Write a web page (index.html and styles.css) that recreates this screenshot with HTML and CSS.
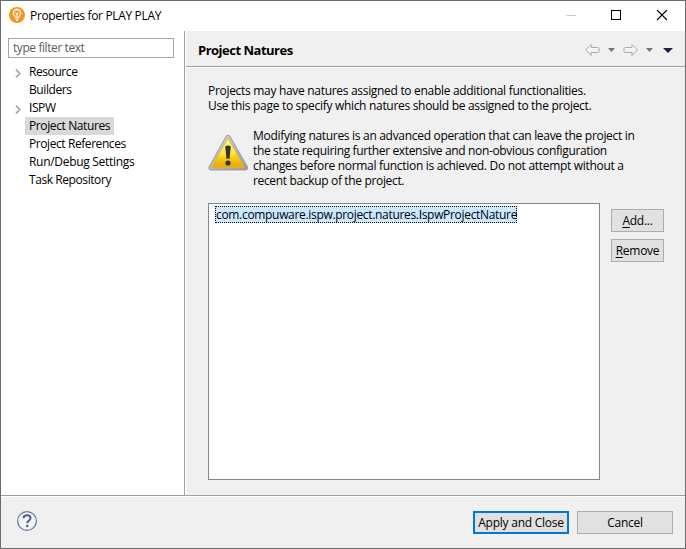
FILE: index.html
```html
<!DOCTYPE html>
<html lang="en">
<head>
<meta charset="utf-8">
<title>Properties for PLAY PLAY</title>
<link rel="stylesheet" href="styles.css">
</head>
<body>
<div class="window">
  <header class="titlebar">
    <svg class="app-icon" width="16" height="16" viewBox="0 0 16 16"><circle cx="8" cy="8" r="8" fill="#f7941d"/><path d="M6.200 10.500C6.200 9 4.200 8.600 4.200 6.200a3.800 3.800 0 0 1 7.600 0c0 2.400-2 2.800-2 4.300z" fill="#f9a94b" stroke="#fff" stroke-width="1.100"/><path d="M6.300 12h3.400M7 13.500h2M8 10V7M6.800 6l1.200 1.200L9.200 6" stroke="#fff" stroke-width=".9" fill="none"/></svg>
    <span class="title">Properties for PLAY PLAY</span>
    <svg class="controls" width="104" height="12" viewBox="0 0 104 12" shape-rendering="crispEdges"><path d="M0 6.500h10" stroke="#ccc"/><rect x="45.500" y="1.500" width="9" height="9" fill="none" stroke="#000"/><path d="M91 1l10 10M101 1L91 11" stroke="#000" stroke-width="1.100" shape-rendering="auto"/></svg>
  </header>
  <main class="body">
    <nav class="sidebar">
      <div class="filter"><span>type filter text</span></div>
      <ul class="tree">
        <li><svg class="chev" width="6" height="9" viewBox="0 0 6 9"><path d="M1 .7l3.700 3.800L1 8.300"/></svg><span>Resource</span></li>
        <li><span>Builders</span></li>
        <li><svg class="chev" width="6" height="9" viewBox="0 0 6 9"><path d="M1 .7l3.700 3.800L1 8.300"/></svg><span><span class="cap-i">I</span>SPW</span></li>
        <li><span class="selected">Project Natures</span></li>
        <li><span>Project References</span></li>
        <li><span class="t-run">Run/Debug Settings</span></li>
        <li><span>Task Repository</span></li>
      </ul>
    </nav>
    <section class="page">
      <div class="page-head">
        <h1><span>Project Natures</span></h1>
        <svg class="nav" width="90" height="14" viewBox="0 0 90 14"><defs><linearGradient id="a" x2="0" y2="1"><stop stop-color="#fff"/><stop offset="1" stop-color="#e4e4e4"/></linearGradient></defs><g fill="url(#a)" stroke="#aaa" stroke-linejoin="round"><path d="M.6 7l5.500-5.500v3h6.500q1.500 0 1.500 1v3q0 1-1.500 1H6.100v3z"/><path d="M52.500 7L47 1.500v3h-6.500q-1.500 0-1.500 1v3q0 1 1.500 1H47v3z"/></g><path d="M23 5h7l-3.500 4z" fill="#76747b"/><path d="M61 5h7l-3.500 4z" fill="#76747b"/><path d="M78 5h10l-5 5z" fill="#2f1743"/></svg>
      </div>
      <div class="content">
        <p class="intro"><span>Projects may have natures assigned to enable additional functionalities.</span><span>Use this page to specify which natures should be assigned to the project.</span></p>
        <div class="warning">
          <svg width="41" height="37" viewBox="0 0 41 37"><defs><linearGradient id="y" x2="0" y2="1"><stop stop-color="#fff27a"/><stop offset=".45" stop-color="#fbe51e"/><stop offset="1" stop-color="#efa30b"/></linearGradient><linearGradient id="g" x2="1" y2="1"><stop stop-color="#d8d8d8"/><stop offset="1" stop-color="#999"/></linearGradient></defs><path d="M18 2.300q2-2.600 4 0L39.600 33q.8 2.800-2 3H3q-3-.4-2-3z" fill="url(#g)" stroke="#929292" stroke-width=".8"/><path d="M20 4.500L36.500 33.500h-33z" fill="url(#y)" stroke="#e0ba16" stroke-width=".7"/><path d="M20 5L10.500 21.500q11 2 18 -2z" fill="#fff" opacity=".2"/><path d="M17.200 12.500q2.800-2 5.600 0l-1.300 12.200h-3z" fill="#34332c"/><circle cx="20" cy="29" r="2.600" fill="#34332c"/></svg>
          <p><span>Modifying natures is an advanced operation that can leave the project in</span><span class="w2">the state requiring further extensive and non-obvious configuration</span><span>changes before normal function is achieved. Do not attempt without a</span><span class="w4">recent backup of the project.</span></p>
        </div>
        <div class="natures">
          <div class="list"><div class="item"><span>com.compuware.ispw.project.natures.<span class="cap-i">I</span>spwProjectNature</span></div></div>
          <div class="actions"><button><span><u>A</u>dd...</span></button><button><span><u>R</u>emove</span></button></div>
        </div>
      </div>
    </section>
  </main>
  <footer class="footer">
    <svg width="22" height="22" viewBox="0 0 22 22"><circle cx="11" cy="11" r="9.400" fill="#f3f4f6" stroke="#66799b" stroke-width="1.200"/><path d="M7.500 8.300Q7.600 5.200 11 5.200t3.500 2.800q0 1.500-1.600 2.600T11.300 13.200" fill="none" stroke="#4b6189" stroke-width="2"/><circle cx="11.200" cy="16" r="1.300" fill="#4b6189"/></svg>
    <div class="buttons"><button class="primary"><span>Apply and Close</span></button><button><span>Cancel</span></button></div>
  </footer>
</div>
</body>
</html>
```
FILE: styles.css
```css
* { box-sizing: border-box; }
body { margin: 0; font: 12px/15px "Open Sans", "Noto Sans", sans-serif; color: #000; letter-spacing: -0.25px; }
p, h1, ul { margin: 0; padding: 0; }
span { white-space: nowrap; }
.cap-i { font-family: "Liberation Sans", sans-serif; line-height: 1px; }
.window { width: 686px; height: 549px; border: 1px solid #6b6b6d; display: flex; flex-direction: column; background: #f0f0f0; overflow: hidden; }
.titlebar { height: 30px; flex: none; background: #fff; display: flex; align-items: center; padding: 0 15px 2px 8px; }
.title { margin-left: 5px; padding-top: 1px; letter-spacing: -0.34px; }
.controls { margin-left: auto; }
.body { height: 464px; flex: none; display: flex; }
.sidebar { width: 184px; flex: none; background: #fff; border-right: 1px solid #a0a0a0; padding: 7px 10px 0 7px; }
.filter { height: 20px; border: 1px solid #a5a5ab; padding: 1px 4px; color: #5c5c5c; line-height: 16px; letter-spacing: -0.42px; }
.tree { list-style: none; padding-top: 5px; letter-spacing: -0.42px; }
.tree li { height: 18px; line-height: 18px; display: flex; align-items: center; padding-left: 21px; }
.t-run { letter-spacing: -0.3px; }
.chev { margin: 2px 8px 0 -14px; fill: none; stroke: #a6a6a6; stroke-width: 1.7; }
.tree li > .chev { flex: none; }
.selected { background: #d9d9d9; height: 18px; width: 89px; margin-left: -4px; padding-left: 4px; flex: none; letter-spacing: -0.39px; }
.page { flex: 1; border-left: 1px solid #fff; }
.page-head { height: 37px; border-bottom: 1px solid #fff; box-shadow: inset 0 -1px #a0a0a0; display: flex; align-items: center; padding: 0 10px 0 12px; }
h1 { font-size: 13px; line-height: 18px; font-weight: 700; letter-spacing: -0.5px; padding-top: 1px; }
.nav { margin: 1px 0 0 auto; }
.content { padding: 15px 21px 0 22px; letter-spacing: -0.306px; }
.intro span, .warning p > span { display: block; width: max-content; }
.warning { display: flex; gap: 4px; margin-top: 15px; height: 75px; }
.warning svg { margin-top: 6px; flex: none; }
.w2 { letter-spacing: -0.35px; }
.w4 { letter-spacing: -0.34px; }
.natures { display: flex; gap: 11px; }
.list { width: 392px; height: 277px; border: 1px solid #828790; background: #fff; padding: 2px 6px; }
.item { width: 302px; height: 17px; border: 1px dotted #000; background: #cce8ff; line-height: 15px; letter-spacing: -0.32px; }
.actions { display: flex; flex-direction: column; gap: 7px; padding-top: 6px; }
button { font: inherit; letter-spacing: -0.25px; color: #000; width: 53px; height: 23px; padding: 0; border: 1px solid #adadad; background: #e1e1e1; line-height: 19px; }
u { text-underline-offset: 2px; }
.footer { height: 53px; border-top: 1px solid #a0a0a0; box-shadow: inset 0 1px #fff; display: flex; align-items: flex-start; padding: 14px 12px 0 15px; }
.buttons { margin: 1px 0 0 auto; display: flex; gap: 8px; }
.buttons button { width: 96px; }
.buttons .primary { border: 2px solid #0078d7; line-height: 17px; }
```
